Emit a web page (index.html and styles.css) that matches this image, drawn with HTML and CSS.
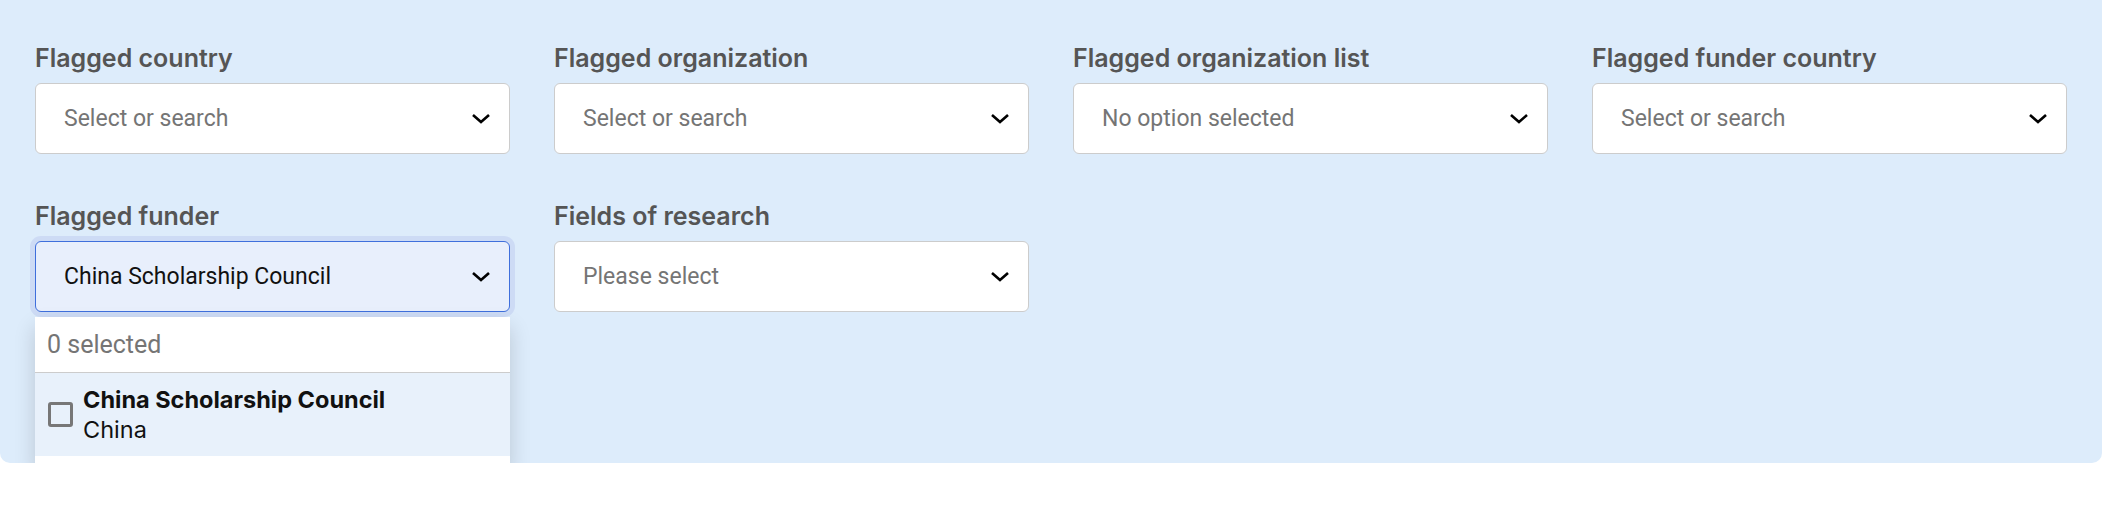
FILE: index.html
```html
<!DOCTYPE html>
<html lang="en">
<head>
<meta charset="UTF-8">
<meta name="viewport" content="width=device-width, initial-scale=1.0">
<title>Flag filters</title>
<link rel="stylesheet" href="styles.css">
</head>
<body>
<div class="filters">
  <div class="filter-grid">
    <div class="field">
      <label>Flagged country</label>
      <div class="select">
        <span class="placeholder">Select or search</span>
        <svg class="chevron" viewBox="0 0 20 11"><path d="M2 2l8 7 8-7"/></svg>
      </div>
    </div>
    <div class="field">
      <label>Flagged organization</label>
      <div class="select">
        <span class="placeholder">Select or search</span>
        <svg class="chevron" viewBox="0 0 20 11"><path d="M2 2l8 7 8-7"/></svg>
      </div>
    </div>
    <div class="field">
      <label>Flagged organization list</label>
      <div class="select">
        <span class="placeholder">No option selected</span>
        <svg class="chevron" viewBox="0 0 20 11"><path d="M2 2l8 7 8-7"/></svg>
      </div>
    </div>
    <div class="field">
      <label>Flagged funder country</label>
      <div class="select">
        <span class="placeholder">Select or search</span>
        <svg class="chevron" viewBox="0 0 20 11"><path d="M2 2l8 7 8-7"/></svg>
      </div>
    </div>
    <div class="field open">
      <label>Flagged funder</label>
      <div class="select focused">
        <span class="value">China Scholarship Council</span>
        <svg class="chevron" viewBox="0 0 20 11"><path d="M2 2l8 7 8-7"/></svg>
      </div>
      <div class="menu">
        <div class="menu-count">0 selected</div>
        <div class="menu-option">
          <span class="checkbox"></span>
          <div class="option-text">
            <div class="option-title">China Scholarship Council</div>
            <div class="option-sub">China</div>
          </div>
        </div>
      </div>
    </div>
    <div class="field">
      <label>Fields of research</label>
      <div class="select">
        <span class="placeholder">Please select</span>
        <svg class="chevron" viewBox="0 0 20 11"><path d="M2 2l8 7 8-7"/></svg>
      </div>
    </div>
  </div>
</div>
</body>
</html>
```

FILE: styles.css
```css
body {
  margin: 0;
  background-color: #fff;
  font-family: Inter, "Noto Sans", sans-serif;
}

.filters {
  width: 2102px;
  box-sizing: border-box;
  background-color: #ddecfb;
  padding: 43px 35px 151px;
  border-radius: 0 0 10px 10px;
}

.filter-grid {
  display: grid;
  grid-template-columns: repeat(4, 475px);
  column-gap: 44px;
  row-gap: 47px;
}

.field {
  position: relative;
}

.field label {
  display: block;
  font-weight: 600;
  font-size: 25px;
  line-height: 30px;
  color: #555;
  margin-bottom: 10px;
}

.select {
  height: 71px;
  box-sizing: border-box;
  background-color: #fff;
  border: 1px solid #ccc;
  border-radius: 6px;
  display: flex;
  align-items: center;
  justify-content: space-between;
  padding: 0 18px 0 28px;
  font-family: Roboto, sans-serif;
  font-size: 23px;
}

.placeholder {
  color: #757575;
}

.value {
  color: #111;
}

.chevron {
  width: 20px;
  height: 11px;
  fill: none;
  stroke: #000;
  stroke-width: 2.6;
}

.select.focused {
  background-color: #e8effc;
  border-color: #3f6fdc;
  box-shadow: 0 0 0 5px #cddbf5;
}

.menu {
  position: absolute;
  left: 0;
  right: 0;
  top: 116px;
  z-index: 2;
  background-color: #fff;
  box-shadow: 0 10px 20px rgba(0, 0, 0, 0.16);
  padding-bottom: 8px;
}

.menu-count {
  height: 55px;
  display: flex;
  align-items: center;
  padding-left: 12px;
  font-family: Roboto, sans-serif;
  font-size: 25px;
  color: #757575;
  border-bottom: 1px solid #ccc;
}

.menu-option {
  height: 83px;
  display: flex;
  align-items: center;
  background-color: #e8f1fb;
  padding-left: 13px;
}

.checkbox {
  width: 19px;
  height: 19px;
  border: 3px solid #777;
  border-radius: 3px;
  margin-right: 10px;
  flex: none;
}

.option-title {
  font-weight: 700;
  font-size: 23.5px;
  line-height: 30px;
  color: #111;
}

.option-sub {
  font-size: 23.5px;
  line-height: 30px;
  color: #111;
}
```
